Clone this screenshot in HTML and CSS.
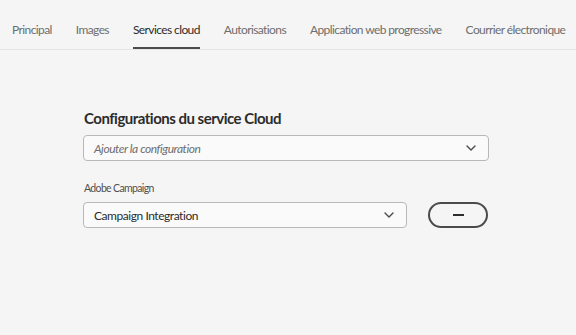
FILE: index.html
```html
<!DOCTYPE html>
<html>
<head>
<meta charset="utf-8">
<link rel="stylesheet" href="styles.css">
</head>
<body>
  <nav class="tabs">
    <div class="tab"><span class="tab-label">Principal</span></div>
    <div class="tab"><span class="tab-label">Images</span></div>
    <div class="tab selected"><span class="tab-label">Services cloud</span></div>
    <div class="tab"><span class="tab-label">Autorisations</span></div>
    <div class="tab"><span class="tab-label">Application web progressive</span></div>
    <div class="tab"><span class="tab-label">Courrier électronique</span></div>
  </nav>

  <main class="panel">
    <h2 class="panel-title">Configurations du service Cloud</h2>
    <div class="select wide">
      <span class="placeholder">Ajouter la configuration</span>
      <svg class="chevron" width="10" height="6" viewBox="0 0 10 6"><path d="M1 1l4 4 4-4" fill="none" stroke="#4b4b4b" stroke-width="1.4" stroke-linecap="round" stroke-linejoin="round"/></svg>
    </div>

    <div class="field">
      <label class="field-label">Adobe Campaign</label>
      <div class="field-row">
        <div class="select narrow">
          <span class="value">Campaign Integration</span>
          <svg class="chevron" width="10" height="6" viewBox="0 0 10 6"><path d="M1 1l4 4 4-4" fill="none" stroke="#4b4b4b" stroke-width="1.4" stroke-linecap="round" stroke-linejoin="round"/></svg>
        </div>
        <button class="remove"><span class="minus"></span></button>
      </div>
    </div>
  </main>
</body>
</html>
```

FILE: styles.css
```css
html, body {
  margin: 0;
  background: #f5f5f5;
  font-family: Lato, "Noto Sans", sans-serif;
  color: #2c2c2c;
}

.tabs {
  display: flex;
  height: 49px;
  border-bottom: 1px solid #e4e4e4;
  white-space: nowrap;
}

.tab {
  display: flex;
  flex-shrink: 0;
  padding: 0 12px;
}

.tab-label {
  display: flex;
  align-items: center;
  font-size: 12px;
  letter-spacing: -0.6px;
  color: #6e6e6e;
  border-bottom: 2px solid transparent;
  padding-top: 11px;
}

.tab.selected .tab-label {
  color: #2c2c2c;
  border-bottom-color: #4b4b4b;
}

.panel {
  padding: 0 88px 0 83px;
}

.panel-title {
  margin: 59px 0 8px 1px;
  font-size: 15px;
  font-weight: 700;
  letter-spacing: -0.5px;
  line-height: 18px;
}

.select {
  box-sizing: border-box;
  display: flex;
  align-items: center;
  justify-content: space-between;
  height: 26px;
  padding: 0 12px 0 10px;
  background: #fafafa;
  border: 1px solid #b8b8b8;
  border-radius: 4px;
  font-size: 12px;
  letter-spacing: -0.45px;
}

.select.wide {
  width: 406px;
}

.select.narrow {
  width: 326px;
}

.placeholder {
  font-style: italic;
  color: #6e6e6e;
}

.value {
  color: #2c2c2c;
}

.chevron {
  display: block;
}

.field {
  margin-top: 21px;
}

.field-label {
  display: block;
  font-size: 10.5px;
  letter-spacing: -0.65px;
  color: #505050;
  margin: 0 0 8px 1px;
}

.field-row {
  display: flex;
  align-items: center;
  gap: 21px;
}

.remove {
  box-sizing: border-box;
  width: 60px;
  height: 26px;
  border: 2px solid #4b4b4b;
  border-radius: 13px;
  background: transparent;
  display: flex;
  align-items: center;
  justify-content: center;
  padding: 0;
}

.minus {
  width: 11px;
  height: 2px;
  background: #2c2c2c;
}
```
